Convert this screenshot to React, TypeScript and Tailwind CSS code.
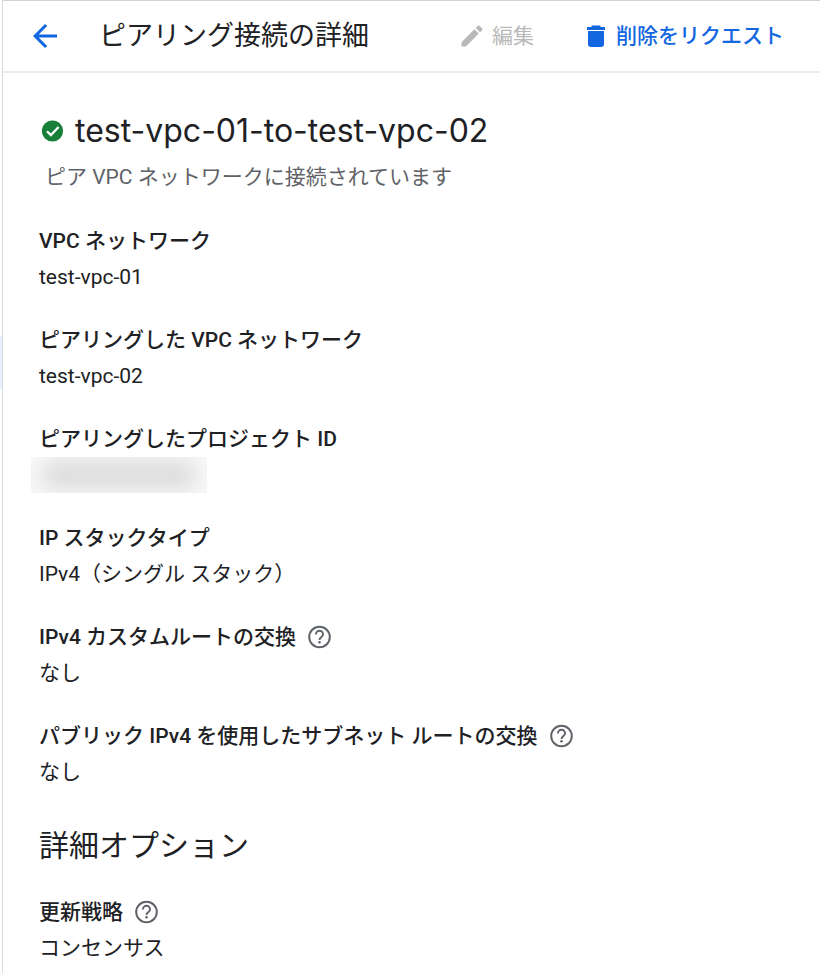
import React from 'react';
import { MdArrowBack, MdEdit } from 'react-icons/md';

interface DetailItem {
  label: string;
  value?: string;
  help?: boolean;
}

const details: DetailItem[] = [
  { label: 'VPC ネットワーク', value: 'test-vpc-01' },
  { label: 'ピアリングした VPC ネットワーク', value: 'test-vpc-02' },
  { label: 'ピアリングしたプロジェクト ID' },
  { label: 'IP スタックタイプ', value: 'IPv4（シングル スタック）' },
  { label: 'IPv4 カスタムルートの交換', value: 'なし', help: true },
  { label: 'パブリック IPv4 を使用したサブネット ルートの交換', value: 'なし', help: true },
];

const advanced: DetailItem[] = [{ label: '更新戦略', value: 'コンセンサス', help: true }];

const TrashIcon: React.FC = () => (
  <svg viewBox="0 0 28 28" fill="currentColor" className="size-7" aria-hidden="true">
    <path d="M10.5 3.500h7a1 1 0 0 1 1 1V5H23v3H5V5h4.500v-.5a1 1 0 0 1 1-1z" />
    <path d="M6 9h16V22a3 3 0 0 1-3 3H9a3 3 0 0 1-3-3z" />
  </svg>
);

const CheckIcon: React.FC = () => (
  <svg viewBox="0 0 26 26" className="size-[26px]" aria-hidden="true">
    <circle cx="13.500" cy="13" r="10.600" fill="#188038" />
    <path d="M8 13.200l3.900 3.900 7.700-8" fill="none" stroke="#fff" strokeWidth="2.200" />
  </svg>
);

const HelpIcon: React.FC = () => (
  <svg viewBox="0 0 28 28" fill="none" stroke="currentColor" className="size-7" aria-hidden="true">
    <circle cx="13.500" cy="14" r="10.300" strokeWidth="2" />
    <path d="M9.900 11.400a3.600 3.600 0 1 1 7.200 0c0 2.400-3.600 2.700-3.600 5.500" strokeWidth="1.900" />
    <circle cx="13.500" cy="19.300" r="1.300" fill="currentColor" stroke="none" />
  </svg>
);

const Detail: React.FC<{ item: DetailItem }> = ({ item }) => (
  <div>
    <dt className="flex h-9 items-center gap-2.5 font-medium">
      <span>{item.label}</span>
      {item.help && (
        <button type="button" aria-label={`${item.label}のヘルプ`} className="text-[#5f6368]">
          <HelpIcon />
        </button>
      )}
    </dt>
    {item.value ? (
      <dd className="flex h-9 items-center">{item.value}</dd>
    ) : (
      <dd className="-ml-2 flex h-9 w-44 items-center justify-center overflow-hidden bg-[#f8f8f8]">
        <div className="h-7 w-38 rounded-lg bg-[#dcdcdc] blur-[10px]" />
      </dd>
    )}
  </div>
);

export default function App() {
  return (
    <div className="flex min-h-screen bg-white font-['Roboto','Noto_Sans_CJK_JP',sans-serif] text-[21px] leading-8 text-[#202124]">
      <div className="flex w-[3px] shrink-0 flex-col border-r border-[#dadce0] pt-[336px]">
        <div className="h-[53px] bg-[#e8f0fe]" />
      </div>
      <div className="min-w-0 flex-1">
        <header className="flex h-[73px] items-center border-t border-b-2 border-t-[#d4d4d4] border-b-[#ebebeb] pr-9 pb-px pl-6">
          <button type="button" aria-label="戻る" className="text-[#1267e0]">
            <MdArrowBack className="size-9" />
          </button>
          <h1 className="ml-9 flex-1 text-[27px] leading-9">ピアリング接続の詳細</h1>
          <div className="flex items-center gap-12">
            <button type="button" disabled className="flex items-center gap-1.5 text-[#b8b8b8]">
              <MdEdit className="size-7" />
              編集
            </button>
            <button type="button" className="flex items-center gap-1.5 font-medium text-[#1267e0]">
              <TrashIcon />
              削除をリクエスト
            </button>
          </div>
        </header>

        <main className="pt-9 pr-9 pl-9">
          <div className="flex h-11 items-center gap-2.5">
            <CheckIcon />
            <h2 className="font-['Inter','Noto_Sans_CJK_JP',sans-serif] text-[32px] leading-11">test-vpc-01-to-test-vpc-02</h2>
          </div>
          <p className="mt-2 pl-1.5 text-[#5f6368]">ピア VPC ネットワークに接続されています</p>

          <dl className="mt-[30px] flex flex-col gap-[27px]">
            {details.map((item) => (
              <Detail key={item.label} item={item} />
            ))}
          </dl>

          <h2 className="mt-[34px] text-[30px] leading-11">詳細オプション</h2>
          <dl className="mt-[26px]">
            {advanced.map((item) => (
              <Detail key={item.label} item={item} />
            ))}
          </dl>
        </main>
      </div>
    </div>
  );
}
